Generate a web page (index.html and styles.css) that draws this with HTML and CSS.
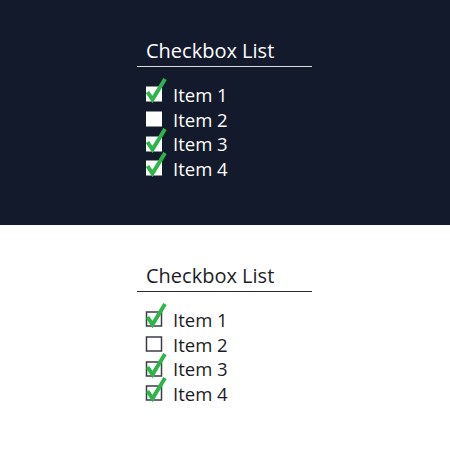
FILE: index.html
```html
<!DOCTYPE html>
<html>
  <head>
    <meta name="viewport" content="width=device-width, initial-scale=1">
    <link rel="stylesheet" href="styles.css">
  </head>
  <body>
    <div class="panel dark">
      <div class="list">
        <div class="title">Checkbox List</div>
        <div class="row"><svg class="box" viewBox="0 0 20 16" width="20" height="16"><rect class="sq" x="1" y="0.5" width="16" height="15"/><path class="tick" d="M2.5 6 L7.5 13.5 L20 -7"/></svg>Item 1</div>
        <div class="row"><svg class="box" viewBox="0 0 20 16" width="20" height="16"><rect class="sq" x="1" y="0.5" width="16" height="15"/></svg>Item 2</div>
        <div class="row"><svg class="box" viewBox="0 0 20 16" width="20" height="16"><rect class="sq" x="1" y="0.5" width="16" height="15"/><path class="tick" d="M2.5 6 L7.5 13.5 L20 -7"/></svg>Item 3</div>
        <div class="row"><svg class="box" viewBox="0 0 20 16" width="20" height="16"><rect class="sq" x="1" y="0.5" width="16" height="15"/><path class="tick" d="M2.5 6 L7.5 13.5 L20 -7"/></svg>Item 4</div>
      </div>
    </div>
    <div class="panel light">
      <div class="list">
        <div class="title">Checkbox List</div>
        <div class="row"><svg class="box" viewBox="0 0 20 16" width="20" height="16"><rect class="sq" x="1.5" y="1" width="15" height="14"/><path class="tick" d="M2.5 6 L7.5 13.5 L20 -7"/></svg>Item 1</div>
        <div class="row"><svg class="box" viewBox="0 0 20 16" width="20" height="16"><rect class="sq" x="1.5" y="1" width="15" height="14"/></svg>Item 2</div>
        <div class="row"><svg class="box" viewBox="0 0 20 16" width="20" height="16"><rect class="sq" x="1.5" y="1" width="15" height="14"/><path class="tick" d="M2.5 6 L7.5 13.5 L20 -7"/></svg>Item 3</div>
        <div class="row"><svg class="box" viewBox="0 0 20 16" width="20" height="16"><rect class="sq" x="1.5" y="1" width="15" height="14"/><path class="tick" d="M2.5 6 L7.5 13.5 L20 -7"/></svg>Item 4</div>
      </div>
    </div>
  </body>
</html>
```

FILE: styles.css
```css
body { margin: 0; font-family: "Open Sans", "Liberation Sans", sans-serif }
.panel { height: 225px; box-sizing: border-box; padding: 40px 0 0 137px }
.dark { background-color: #131a2b; color: white }
.light { background-color: white; color: #1c1d26 }
.list { width: 175px }
.title { font-size: 20px; line-height: 22px; padding: 0 0 4px 9px; border-bottom: 1.5px solid #dcdcdc; margin-bottom: 15px }
.light .title { border-bottom-color: #2a2a33 }
.row { display: flex; align-items: center; height: 24.7px; padding-left: 8px; font-size: 18.5px }
.box { overflow: visible; margin-right: 8px; flex: none }
.dark .sq { fill: white }
.light .sq { fill: none; stroke: #3c3c44; stroke-width: 1.5 }
.tick { fill: none; stroke: #2db54a; stroke-width: 4; stroke-linecap: butt; stroke-linejoin: miter }
```
